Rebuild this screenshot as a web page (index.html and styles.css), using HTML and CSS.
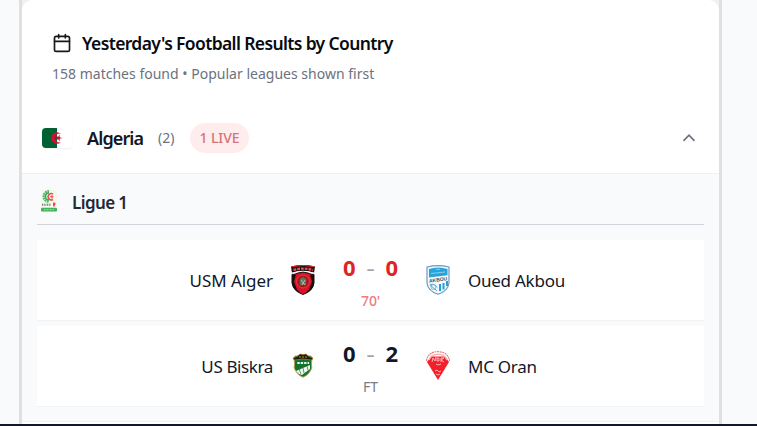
FILE: index.html
```html
<!DOCTYPE html>
<html lang="en">
<head>
<meta charset="utf-8">
<title>Football Results</title>
<link rel="stylesheet" href="styles.css">
</head>
<body>
<main class="panel">
  <div class="surface">
    <header class="head">
      <h1 class="title">
        <svg class="calendar" viewBox="0 0 24 24"><rect x="3" y="4" width="18" height="18" rx="2"/><path d="M8 2v4M16 2v4M3 10h18"/></svg>
        <span>Yesterday's Football Results by Country</span>
      </h1>
      <p class="subtitle">158 matches found • Popular leagues shown first</p>
    </header>
    <div class="country">
      <svg class="flag" viewBox="0 0 30 20"><path fill="#fff" d="M0 0h30v20H0z"/><path fill="#006233" d="M0 0h15v20H0z"/><path fill="#d21034" d="M19 5.8A5.8 5.8 0 1 0 19 14.2A4.5 4.5 0 1 1 19 5.8ZM20.3 10l-2.6.8v2.6l-1.5-2.1-2.5.8 1.5-2.1-1.5-2.1 2.5.8 1.5-2.1v2.6z"/></svg>
      <h2 class="country-name">Algeria</h2>
      <span class="count">(2)</span>
      <span class="live"><span>1 LIVE</span></span>
      <svg class="chevron" viewBox="0 0 16 16"><path d="M2.5 10.8L8 5.2l5.5 5.6"/></svg>
    </div>
    <section class="league">
      <div class="league-head">
        <svg class="league-logo" viewBox="0 0 16 22"><rect width="16" height="22" rx="1.5" fill="#f4f7e9"/><path d="M8 1.5A5 5 0 0 0 8 11.5" fill="none" stroke="#50b66a" stroke-width="3" stroke-dasharray="1.6 .6"/><path d="M8 3A3.5 3.5 0 0 0 8 10" fill="none" stroke="#39a95a" stroke-width="1.5"/><path d="M12 4A3.2 3.2 0 1 0 12 9.5" fill="none" stroke="#e84b56" stroke-width="1.5"/><path d="M9 6.8h3.5M11 5v3.6" stroke="#e84b56"/><path d="M1 14.7h9" stroke="#758078" stroke-width="2" stroke-dasharray="1 .7"/><path d="M13 12.5v4M12 14h2.5" stroke="#ed3545" stroke-width="1.5"/><rect y="17.8" width="16" height="3.8" rx="1" fill="#43b45c"/><path d="M3 19.7h10" stroke="#a7dda9" stroke-dasharray="1 .5"/></svg>
        <h3 class="league-name">Ligue 1</h3>
      </div>
      <div class="matches">
        <article class="match is-live">
          <span class="team home usma">USM Alger</span>
          <svg class="crest" viewBox="0 0 24 30"><path fill="#151112" d="M0 1.5Q12-1.3 24 1.5L23 8Q12 4 1 8Z"/><path fill="none" stroke="#e62532" d="M.6 1.7Q12-.8 23.4 1.7"/><path fill="none" stroke="#ef4b55" stroke-width="2.4" stroke-dasharray="2.8 1" d="M2.5 5Q12 2.2 22 5"/><path fill="#fff" d="M1 7.5Q12 3.8 23 7.5V10H1z"/><path fill="#dc1028" stroke="#181012" d="M1 9.5Q4 9.5 7 8Q12 6.2 17 8Q20 9.5 23 9.5V18Q22 26 12 29.5Q2 26 1 18Z"/><path fill="#17110f" d="M1 10l4-.5-2 7 3 8 4 4Q3 26 1 18zM23 10l-4-.5 2 7-3 8-4 4Q22 26 23 18z"/><circle cx="12" cy="16.5" r="6.5" fill="#b51b28" stroke="#e43a3d"/><circle cx="12" cy="16.5" r="4.6" fill="none" stroke="#5b2020" stroke-dasharray="1 1"/><path fill="#66735e" d="M9 14l3-2 3 2v6H9z"/><path stroke="#33779a" stroke-width="1.5" d="M10 17h4"/><path stroke="#edc57b" stroke-width=".8" d="M10 15l4 5M14 15l-3 5"/></svg>
          <div class="result"><div class="score"><b>0</b><i>-</i><b>0</b></div><span class="status">70'</span></div>
          <svg class="crest" viewBox="0 0 24 30"><path fill="#f2f8fb" stroke="#7199b8" stroke-width="1.2" d="M1 2Q12-.8 23 2V18Q22 26 12 29.3Q2 26 1 18Z"/><path fill="#25a4dc" d="M3 4Q12 1 21.5 4v6.2L3 12.5z"/><path fill="none" stroke="#8bd0ed" d="M5 8.5l14-1.5M10 4.3h4"/><text x="12" y="16.5" class="crest-name" transform="rotate(-8 12 14)">AKBOU</text><path stroke="#259fd6" stroke-width="2" d="M14 19v7M17.5 18v6.5M21 16v5"/><path fill="none" stroke="#58a9cd" d="M4 19.5q5-1 7 3M4 20l7 6"/><circle cx="7.5" cy="22" r="2.5" fill="none" stroke="#79a9bd" stroke-width=".8"/></svg>
          <span class="team akbou">Oued Akbou</span>
        </article>
        <article class="match">
          <span class="team home biskra">US Biskra</span>
          <svg class="crest" viewBox="0 0 24 30"><path fill="#13732d" stroke="#b8a151" d="M4 5h16l1.5 3Q20 9 20.8 17Q18 24 12 26.2Q6 24 3.2 17Q4 9 2.5 8z"/><path fill="#1b1b13" stroke="#a28535" stroke-width=".7" d="M2 7l4-1.5 3-2.5 3 .5 3-.5 3 2.5L22 7l-1.5 2Q12 7 3.5 9z"/><path stroke="#c2942f" d="M8 6h8" stroke-dasharray="2 1"/><path stroke="#edf5e9" stroke-width="1.8" stroke-dasharray="2.4 1" d="M6.3 12h11.8"/><path fill="#f1f7ee" d="M5 20l14-6v4l-8 6-3-1z"/><path fill="none" stroke="#238541" stroke-width=".8" d="M8 18l2 5M12 17l1 5M16 15l1 4"/></svg>
          <div class="result"><div class="score"><b>0</b><i>-</i><b>2</b></div><span class="status">FT</span></div>
          <svg class="crest" viewBox="0 0 24 30"><path fill="#f2202b" d="M6 4h12l5 7-11 18L1 11z"/><path fill="#fff" d="M4 3Q12-1 20 3l1 2.5H3z"/><path fill="none" stroke="#ed7a82" stroke-width="1.2" stroke-dasharray="2 .6" d="M.3 10Q2 .7 12 .7T23.7 10"/><path fill="none" stroke="#f5b5b8" stroke-width="1.4" d="M3 9Q5 3.3 12 3.3T21 9"/><path fill="none" stroke="#ffd5d6" stroke-width=".8" d="M6 11l1-4 2 3 1-4M11 7v3h2V7h-2M15 11V7h3l-3 2 3 2M10 13l2 1 3-1"/><path fill="none" stroke="#ffb0b3" d="M9 20l2-1 2 2 2-1M10 23l2 1 2-1"/></svg>
          <span class="team oran">MC Oran</span>
        </article>
      </div>
    </section>
    <div class="next"></div>
  </div>
</main>
<footer class="bottom-bar"></footer>
</body>
</html>
```
FILE: styles.css
```css
* { box-sizing: border-box; }
body {
  margin: 0; width: 757px; height: 426px; overflow: hidden;
  display: flex; flex-direction: column; background: #f9fafc;
  color: #111827; font-family: "Noto Sans", "Open Sans", sans-serif;
}
h1, h2, h3, p { margin: 0; }
svg { display: block; flex: none; }
.panel {
  width: 703px; height: 424px; margin-left: 19px; flex: none;
  border: solid #e1e0e0; border-width: 0 3px; background: #f0f0f0;
}
.surface { height: 424px; background: #fff; border-radius: 10px 10px 0 0; overflow: hidden; }
.head { height: 105px; padding: 30px 30px 0; white-space: nowrap; }
.title { display: flex; align-items: center; gap: 10px; height: 25px; font-size: 17.5px; font-weight: 600; letter-spacing: -.63px; color: #080b10; }
.calendar { width: 20px; height: 20px; fill: none; stroke: #17181b; stroke-width: 2; stroke-linecap: round; }
.subtitle { margin-top: 9px; font-size: 14px; line-height: 20px; letter-spacing: .01px; color: #6b7280; }
.country { height: 69px; padding: 0 22px 3px 20px; display: flex; align-items: center; border-bottom: 1px solid #eff0f2; white-space: nowrap; }
.flag { width: 30px; height: 20px; border-radius: 4px; box-shadow: 0 1px 2px #0001; }
.country-name { margin-left: 15px; width: 57px; font-size: 18px; font-weight: 600; letter-spacing: -.9px; }
.count { margin-left: 14px; width: 18px; font-size: 14px; letter-spacing: 0; color: #6b7280; }
.live { margin-left: 14px; width: 59px; height: 30px; border-radius: 15px; display: grid; place-items: center; background: #ffecec; color: #d57479; font-size: 14px; font-weight: 500; letter-spacing: -.1px; }
.chevron { width: 16px; height: 16px; margin-left: auto; fill: none; stroke: #6b7280; stroke-width: 1.7; }
.league { height: 247px; padding: 0 15px; background: #f9fafc; }
.league-head { height: 51px; padding: 7px 4px 0; display: flex; align-items: center; gap: 15px; border-bottom: 1px solid #d1d5db; }
.league-logo { width: 16px; height: 22px; margin-top: -3px; }
.league-name { font-size: 17px; font-weight: 600; letter-spacing: -.6px; color: #1f2937; }
.matches { padding-top: 15px; display: grid; gap: 5px; }
.match { height: 81px; display: grid; grid-template-columns: 236px 24px 75px 24px 1fr; column-gap: 18px; align-items: center; background: #fff; border-bottom: 1px solid #f1f2f4; white-space: nowrap; }
.team { font-size: 17px; line-height: 24px; letter-spacing: -.25px; padding-top: 1px; }
.home { text-align: right; }
.usma { letter-spacing: -.05px; }
.biskra { letter-spacing: -.38px; }
.crest { width: 24px; height: 30px; }
.result { display: flex; flex-direction: column; align-items: center; height: 58px; margin: -3px 0 0; }
.score { width: 55px; display: flex; justify-content: space-between; align-items: center; height: 34px; font-size: 22px; line-height: 34px; }
.score i { font-style: normal; font-weight: 400; color: #9ca3af; transform: scaleX(1.2); }
.is-live .score b { color: #dc2626; }
.status { margin-top: 7px; font-size: 14px; line-height: 20px; color: #777d89; letter-spacing: -.1px; }
.is-live .status { color: #ed7b80; font-weight: 500; }
.crest-name { font: bold 5px "Liberation Sans", sans-serif; text-anchor: middle; fill: #34566c; }
.next { height: 3px; border-top: 1px solid #f0f1f3; background: #fff; }
.bottom-bar { height: 2px; flex: none; background: #111827; }
```
